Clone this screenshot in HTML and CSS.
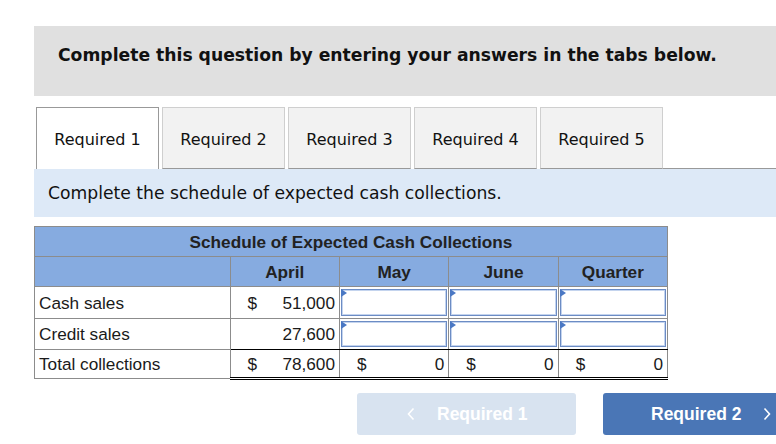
FILE: index.html
```html
<!DOCTYPE html>
<html>
<head>
<meta charset="utf-8">
<link rel="stylesheet" href="styles.css">
</head>
<body>
<div class="page">
  <div class="intro">Complete this question by entering your answers in the tabs below.</div>
  <div class="tabs">
    <div class="tab active">Required 1</div>
    <div class="tab">Required 2</div>
    <div class="tab">Required 3</div>
    <div class="tab">Required 4</div>
    <div class="tab">Required 5</div>
    <div class="tab-fill"></div>
  </div>
  <div class="instr">Complete the schedule of expected cash collections.</div>
  <table class="sched">
    <tr><th class="title" colspan="5">Schedule of Expected Cash Collections</th></tr>
    <tr class="hdr"><th class="lab"></th><th>April</th><th>May</th><th>June</th><th>Quarter</th></tr>
    <tr>
      <td class="lab">Cash sales</td>
      <td class="num"><div class="amt"><span>$</span><span>51,000</span></div></td>
      <td class="in"><div class="inp"></div></td>
      <td class="in"><div class="inp"></div></td>
      <td class="in"><div class="inp"></div></td>
    </tr>
    <tr class="pre">
      <td class="lab">Credit sales</td>
      <td class="num"><div class="amt"><span></span><span>27,600</span></div></td>
      <td class="in"><div class="inp"></div></td>
      <td class="in"><div class="inp"></div></td>
      <td class="in"><div class="inp"></div></td>
    </tr>
    <tr class="tot">
      <td class="lab">Total collections</td>
      <td class="num"><div class="amt"><span>$</span><span>78,600</span></div></td>
      <td class="num"><div class="amt"><span>$</span><span>0</span></div></td>
      <td class="num"><div class="amt"><span>$</span><span>0</span></div></td>
      <td class="num"><div class="amt"><span>$</span><span>0</span></div></td>
    </tr>
  </table>
  <div class="nav">
    <div class="btn prev"><svg class="chev" width="8" height="14" viewBox="0 0 8 14"><path d="M6.5 1.5 L1.5 7 L6.5 12.5" fill="none" stroke="#fff" stroke-width="1.6"/></svg><span>Required 1</span></div>
    <div class="btn next"><span>Required 2</span><svg class="chev" width="8" height="14" viewBox="0 0 8 14"><path d="M1.5 1.5 L6.5 7 L1.5 12.5" fill="none" stroke="#fff" stroke-width="1.6"/></svg></div>
  </div>
</div>
</body>
</html>
```
FILE: styles.css
```css
html, body { margin: 0; padding: 0; overflow: hidden; background: #fff; }
.page { padding: 26px 0 0 34px; width: 800px; }
.intro {
  background: #e0e0e0; height: 70px; box-sizing: border-box;
  padding: 19px 0 0 24px;
  font-family: "DejaVu Sans", Verdana, sans-serif; font-weight: bold; font-size: 17.2px;
  color: #111;
}
.tabs { display: flex; margin-top: 11px; height: 62px; }
.tab {
  width: 123px; box-sizing: border-box; margin-left: 3px;
  background: #f2f2f2; border: 1px solid #cfcfcf; border-bottom: 1px solid #999;
  display: flex; align-items: center; justify-content: center; padding-top: 2px;
  font-family: "DejaVu Sans", Verdana, sans-serif; font-size: 16px; color: #111;
}
.tab.active { margin-left: 2px; background: #fff; border-color: #999; border-bottom: none; }
.tab-fill { flex: 1; border-bottom: 1px solid #999; }
.instr {
  background: #dde9f7; height: 48px; box-sizing: border-box;
  display: flex; align-items: center; padding-left: 14px;
  font-family: "DejaVu Sans", Verdana, sans-serif; font-size: 17.2px; color: #111;
}
.sched {
  margin-top: 9px; border-collapse: collapse; width: 634px;
  font-family: "Liberation Sans", Arial, sans-serif; font-size: 17.2px; line-height: 20px; color: #1a1a1a;
}
.sched th, .sched td { border: 1px solid #8c8c8c; padding: 0; height: 29px; }
.sched th { background: #86abe0; font-weight: bold; color: #222; }
.sched .lab { width: 190px; text-align: left; padding-left: 4px; }
.sched td.num { width: 108px; }
.amt { display: flex; justify-content: space-between; padding: 0 4px 0 17px; }
.sched td.in { padding: 1px 1px; position: relative; }
.inp {
  height: 25px; border: 1px solid #6c8cc4; box-shadow: inset 0 0 0 1px #c4d4ee;
  background: #fff; position: relative;
}
.inp::before {
  content: ""; position: absolute; left: -1px; top: -1px;
  border-left: 6px solid #4a78c4; border-top: 4px solid transparent; border-bottom: 4px solid transparent;
}
.sched tr.pre td { height: 28px; }
.sched tr.pre .inp { height: 24px; }
.sched tr.tot td { height: 27px; }
.sched tr.pre td.num, .sched tr.pre td.in { border-bottom: 1px solid #000; }
.sched tr.tot td.num { border-bottom: 3px double #000; }
.nav { display: flex; margin-top: 13px; margin-left: 323px; gap: 27px; }
.btn {
  width: 219px; height: 42px; border-radius: 3px; box-sizing: border-box;
  display: flex; align-items: center; color: #fff;
  font-family: "Liberation Sans", Arial, sans-serif; font-weight: bold; font-size: 17.5px;
}
.btn.prev { background: #d8e3f0; padding-left: 50px; gap: 22px; }
.btn.next { background: #4a76b6; padding-left: 48px; gap: 22px; }
.chev { flex: none; }
```
